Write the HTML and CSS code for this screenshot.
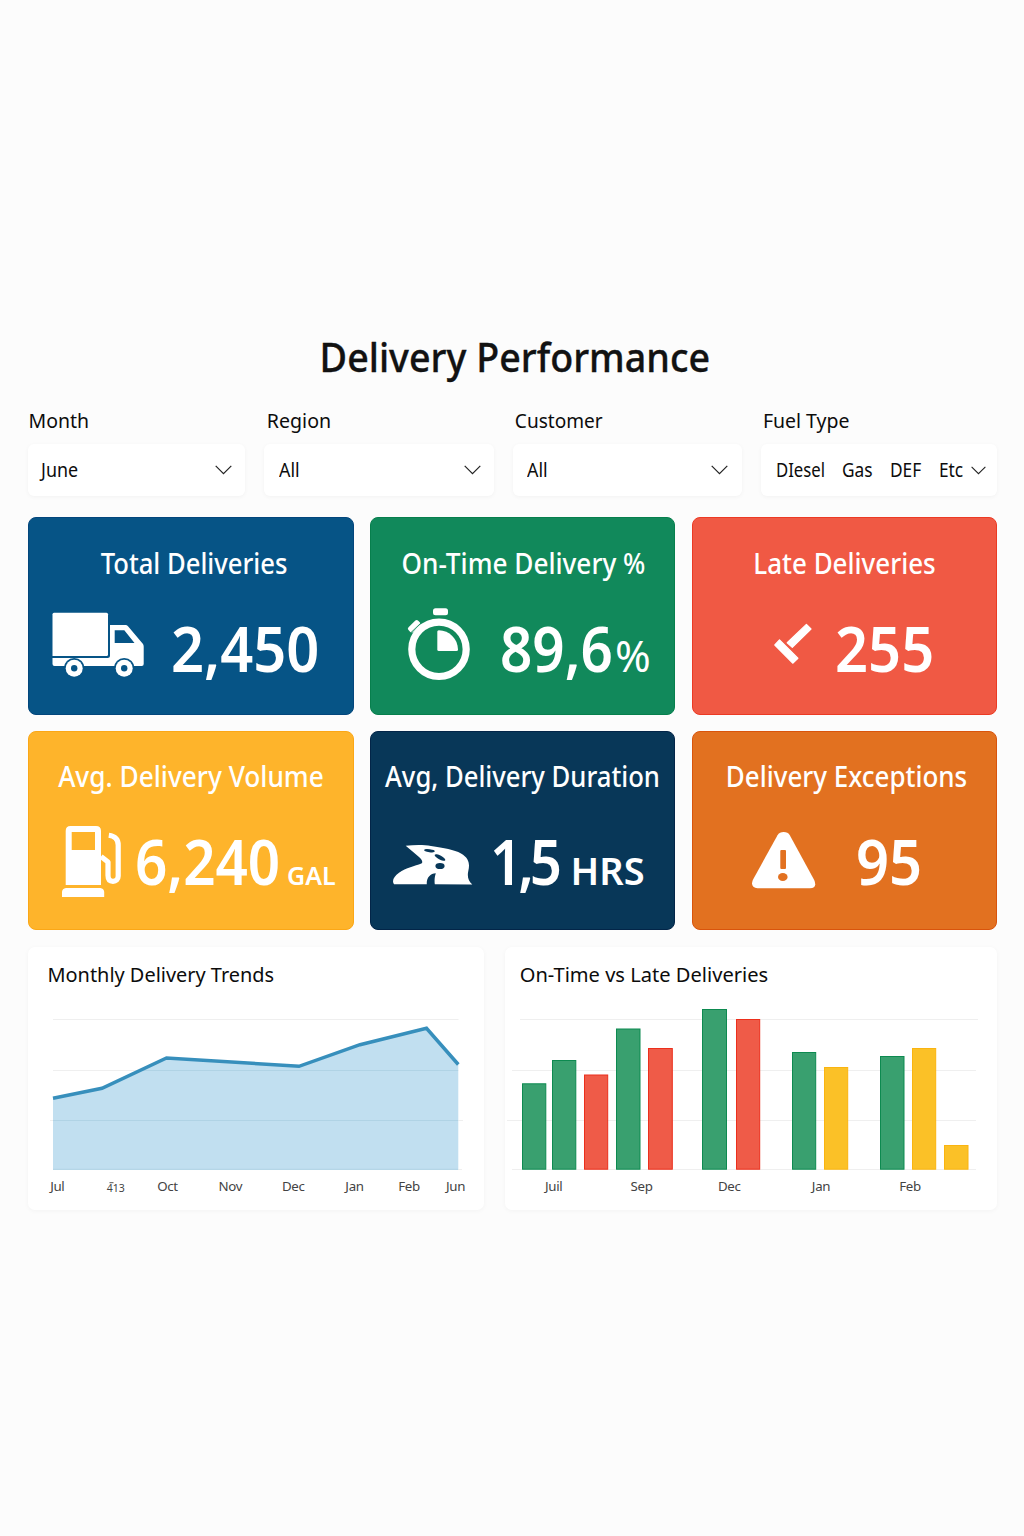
FILE: index.html
```
<!DOCTYPE html>
<html lang="en">
<head>
<meta charset="utf-8">
<title>Delivery Performance</title>
<link rel="stylesheet" href="styles.css">
</head>
<body>
<main class="dashboard">
  <h1 class="page-title">Delivery Performance</h1>

  <section class="filters">
    <div class="filter filter-month">
      <span class="filter-label">Month</span>
      <div class="select"><span class="value">June</span>
        <svg class="chevron" viewBox="0 0 17 10"><path d="M.7 .8 8.5 8.6 16.3 .8"/></svg></div>
    </div>
    <div class="filter filter-region">
      <span class="filter-label">Region</span>
      <div class="select"><span class="value">All</span>
        <svg class="chevron" viewBox="0 0 17 10"><path d="M.7 .8 8.5 8.6 16.3 .8"/></svg></div>
    </div>
    <div class="filter filter-customer">
      <span class="filter-label">Customer</span>
      <div class="select"><span class="value">All</span>
        <svg class="chevron" viewBox="0 0 17 10"><path d="M.7 .8 8.5 8.6 16.3 .8"/></svg></div>
    </div>
    <div class="filter filter-fuel">
      <span class="filter-label">Fuel Type</span>
      <div class="select">
        <span class="value opt-diesel">DIesel</span><span class="value opt-gas">Gas</span><span class="value opt-def">DEF</span><span class="value opt-etc">Etc</span>
        <svg class="chevron small" viewBox="0 0 17 10"><path d="M.7 .8 8.5 8.6 16.3 .8"/></svg></div>
    </div>
  </section>

  <section class="kpis">
    <article class="kpi kpi-total">
      <h2>Total Deliveries</h2>
      <div class="kpi-body">
        <svg class="icon" width="92" height="90" viewBox="52 600 92 90">
          <path d="M54 612.7H106.500Q108 612.700 108 614.200V654.500Q108 656 106.500 656H52.500V614.200Q52.500 612.700 54 612.700Z"/>
          <path fill-rule="evenodd" d="M52.500 658H107.500Q110 658 110 655.500V625H125.500Q127 625 128 626.200L143 644Q143.700 645 143.700 646.500V664Q143.700 666 141.700 666H54.500Q52.500 666 52.500 664ZM114.700 630.200V643H134.500L124.300 630.200Z"/>
          <g class="cut"><circle cx="74.200" cy="668.300" r="10.400"/><circle cx="124.200" cy="668.300" r="10.400"/></g>
          <circle cx="74.200" cy="668.300" r="8.500"/><circle cx="124.200" cy="668.300" r="8.500"/>
          <g class="cut"><circle cx="74.200" cy="668.300" r="3.200"/><circle cx="124.200" cy="668.300" r="3.200"/></g>
        </svg>
        <div class="figure"><span class="number">2,450</span></div>
      </div>
    </article>

    <article class="kpi kpi-ontime">
      <h2>On-Time Delivery %</h2>
      <div class="kpi-body">
        <svg class="icon" width="64" height="90" viewBox="406 600 64 90">
          <circle class="ring" cx="439" cy="649.300" r="27.200"/>
          <path d="M438.800 630.300Q437.300 630.300 437.300 631.800V649.500Q437.300 651 438.800 651H456.500Q458 651 458 649.500C457.600 638.500 449.500 630.700 438.800 630.300Z"/>
          <rect x="433" y="608.300" width="15" height="7" rx="2.500"/>
          <rect x="407.500" y="623" width="13.500" height="6.600" rx="2" transform="rotate(-44 414.200 626.300)"/>
          <path class="seam" d="M409 634.500 421.500 622.500"/>
        </svg>
        <div class="figure"><span class="number">89,6</span><span class="unit">%</span></div>
      </div>
    </article>

    <article class="kpi kpi-late">
      <h2>Late Deliveries</h2>
      <div class="kpi-body">
        <svg class="icon" width="40" height="90" viewBox="773 600 40 90">
          <path class="soft" d="M806.400 624.400 811 629 792.300 647.400 787.200 642.800Z"/>
          <path class="soft" d="M779.500 639.800 797.900 658.200 792.700 663.200 774.800 645Z"/>
        </svg>
        <div class="figure"><span class="number">255</span></div>
      </div>
    </article>

    <article class="kpi kpi-volume">
      <h2>Avg. Delivery Volume</h2>
      <div class="kpi-body">
        <svg class="icon" width="62" height="90" viewBox="61 813 62 90">
          <path fill-rule="evenodd" d="M70.500 826H96Q101 826 101 831V885H65.700V831Q65.700 826 70.500 826ZM71.700 832V850H95V832Z"/>
          <path d="M66 888H100.300Q104 888.500 104.200 892V897H62V892Q62.200 888.500 66 888Z"/>
          <path class="hose" d="M101 856.500 108 862V875.500C108 879.500 110 881.300 113 881.300S118.200 879.500 118.200 876V845C118.200 839 115 836.200 108.800 835.300"/>
        </svg>
        <div class="figure"><span class="number">6,240</span><span class="unit">GAL</span></div>
      </div>
    </article>

    <article class="kpi kpi-duration">
      <h2>Avg, Delivery Duration</h2>
      <div class="kpi-body">
        <svg class="icon" width="81" height="90" viewBox="392 813 81 90">
          <path d="M405.700 845.700C415 844.700 424 844.600 431 846C444 848.200 454 849.500 461 853.500C469 858 470 864 468.300 871C467 877 468.500 881 472.300 884.500L434.800 884.300C434.200 880 434.800 876.500 435.800 873.300C430 873.600 426.300 878 426.800 884.200H394C391.500 880.500 394 876.500 399 872.700C406 867.800 415 866.300 421.300 863.600C423.400 862.300 421.800 859.500 419 857C414.500 853 410 849.300 405.700 845.700Z"/>
          <g class="cut">
            <ellipse cx="429.500" cy="850.700" rx="5.400" ry="1.500" transform="rotate(7 429.500 850.700)"/>
            <ellipse cx="440" cy="857.500" rx="5.900" ry="2" transform="rotate(27 440 857.500)"/>
            <ellipse cx="440" cy="866" rx="4.600" ry="3.100"/>
          </g>
        </svg>
        <div class="figure"><span class="number">1,5</span><span class="unit">HRS</span></div>
      </div>
    </article>

    <article class="kpi kpi-exceptions">
      <h2>Delivery Exceptions</h2>
      <div class="kpi-body">
        <svg class="icon" width="66" height="90" viewBox="751 813 66 90">
          <path d="M777.500 835.300Q779.500 832 783.700 832T789.800 835.300L814.200 880Q817.500 888 810 888.200H757.500Q750 887.500 752.800 880Z"/>
          <g class="cut"><rect x="780.300" y="850" width="5.700" height="19" rx="1"/><ellipse cx="782.800" cy="877" rx="4.800" ry="4"/></g>
        </svg>
        <div class="figure"><span class="number">95</span></div>
      </div>
    </article>
  </section>

  <section class="charts">
    <article class="panel panel-trend">
      <h3>Monthly Delivery Trends</h3>
      <svg class="chart" width="456" height="222" viewBox="28 988 456 222">
        <path class="grid" d="M53 1019.500H458.500M53 1070.500H458.500M50 1120.500H463M53 1169.500H462"/>
        <path class="area" d="M53 1098.500 102 1088.500 166.500 1058 299 1066.500 360 1045 426.500 1028.500 458.300 1064.500V1169.700H53Z"/>
        <path class="grid over" d="M141 1070.500H458M53 1120.500H458M53 1169.300H458"/>
        <path class="line" d="M53 1098.300 102 1088.300 166.500 1058 299 1066.300 360 1044.700 426.500 1028.300 458.300 1064.500"/>
        <g class="axis">
          <text x="57.300" y="1191">Jul</text>
          <text x="167.500" y="1191">Oct</text>
          <text x="230.300" y="1191">Nov</text>
          <text x="293.300" y="1191">Dec</text>
          <text x="354.500" y="1191">Jan</text>
          <text x="409" y="1191">Feb</text>
          <text x="455.500" y="1191">Jun</text>
          <text class="tiny" x="115.800" y="1192">413</text>
        </g>
        <path class="macron" d="M109.500 1182.700H113.500"/>
      </svg>
    </article>

    <article class="panel panel-compare">
      <h3>On-Time vs Late Deliveries</h3>
      <svg class="chart" width="492" height="222" viewBox="505 988 492 222">
        <path class="grid" d="M520 1019.500H978M512 1070.500H976M507 1120.500H976M512 1169.500H976"/>
        <g class="bar ontime">
          <rect x="522.500" y="1083.800" width="23.300" height="85.400"/>
          <rect x="552.500" y="1060.500" width="23.300" height="108.700"/>
          <rect x="616.500" y="1029" width="23.500" height="140.200"/>
          <rect x="702.500" y="1009.500" width="24" height="159.700"/>
          <rect x="792.500" y="1052.500" width="23.200" height="116.700"/>
          <rect x="880.500" y="1056.500" width="23.500" height="112.700"/>
        </g>
        <g class="bar late">
          <rect x="584.500" y="1075" width="23.200" height="94.200"/>
          <rect x="648.500" y="1048.500" width="23.800" height="120.700"/>
          <rect x="736.500" y="1019.500" width="23.200" height="149.700"/>
        </g>
        <g class="bar pending">
          <rect x="824.500" y="1067.500" width="23.200" height="101.700"/>
          <rect x="912.500" y="1048.500" width="23.200" height="120.700"/>
          <rect x="944.500" y="1145.500" width="23.500" height="23.700"/>
        </g>
        <g class="axis">
          <text x="553.700" y="1191">Juil</text>
          <text x="641.500" y="1191">Sep</text>
          <text x="729.300" y="1191">Dec</text>
          <text x="821" y="1191">Jan</text>
          <text x="910" y="1191">Feb</text>
        </g>
      </svg>
    </article>
  </section>
</main>
</body>
</html>
```
FILE: styles.css
```
* { box-sizing: border-box; }

body {
  margin: 0;
  min-height: 1536px;
  background: #fcfcfc;
  color: #0c0c0c;
  font-family: "Noto Sans", "Open Sans", sans-serif;
}

h1, h2, h3 { margin: 0; font-weight: 500; white-space: nowrap; }

.dashboard { padding: 329px 27px 0 28px; }

.page-title {
  padding-left: 5px;
  height: 56px;
  font-size: 40.5px;
  line-height: 56px;
  text-align: center;
  color: #121212;
  -webkit-text-stroke: .35px currentColor;
  transform: scaleX(.93);
}

/* Filters */
.filters {
  display: grid;
  grid-template-columns: 217px 230px 229px 236px;
  column-gap: 19px;
  margin-top: 21px;
}

.filter { display: flex; flex-direction: column; align-items: stretch; gap: 10px; }

.filter-label {
  height: 28px;
  padding-left: var(--label-indent);
  font-size: 20.5px;
  line-height: 28px;
  transform: scaleX(.95);
  transform-origin: left;
}

.select {
  display: flex;
  align-items: center;
  height: 52px;
  padding: 0 var(--end) 0 var(--start);
  border-radius: 6px;
  background: #fff;
  box-shadow: 0 1px 4px rgba(0, 0, 0, .045);
}

.value {
  font-size: 19px;
  line-height: 28px;
  white-space: nowrap;
  transform: scaleX(.94);
  transform-origin: left;
}

.chevron {
  width: 17px;
  height: 10px;
  margin-left: auto;
  fill: none;
  stroke: #222;
  stroke-width: 1.2;
}
.chevron.small { width: 15px; height: 9px; flex: none; }

.filter-month { --label-indent: .5px; --start: 13px; --end: 13px; }
.filter-region { --label-indent: 3px; --start: 15px; --end: 13px; }
.filter-customer { --label-indent: 2px; --start: 14px; --end: 14px; }
.filter-region .filter-label { transform: scaleX(.955); }
.filter-customer .filter-label { transform: scaleX(.93); }
.filter-fuel { --label-indent: 2px; --start: 15px; --end: 11px; }
.filter-fuel .value { transform: scaleX(.91); }
.opt-diesel { width: 66px; }
.opt-gas { width: 48px; }
.opt-def { width: 49px; }
.opt-etc { width: 28px; }
.filter-fuel .opt-diesel { transform: scaleX(.88); }

/* KPI cards */
.kpis {
  display: grid;
  grid-template-columns: 326px 305px 305px;
  grid-template-rows: 198px 198.5px;
  column-gap: 16px;
  row-gap: 16px;
  margin-top: 21px;
}

/* the last column sits one pixel further out, flush with the filters */
.kpi-late, .kpi-exceptions { margin: 0 -1px 0 1px; }

.kpi {
  padding-top: var(--top, 25px);
  border: 1px solid var(--edge);
  border-radius: 8px;
  background: var(--tone);
  color: #fff;
}

.kpi h2 {
  height: 40px;
  font-size: 28px;
  line-height: 40px;
  text-align: center;
  transform: translateX(var(--shift, 0)) scaleX(var(--fit, .925));
}

.kpi-body {
  display: flex;
  align-items: flex-start;
  gap: var(--gap);
  height: 90px;
  margin-top: 17px;
  padding-left: var(--inset);
}

.icon { flex: none; fill: #fff; }
.icon .cut { fill: var(--tone); }
.icon .ring { fill: none; stroke: #fff; stroke-width: 7.2; }
.icon .seam { fill: none; stroke: var(--tone); stroke-width: 1; }
.icon .hose { fill: none; stroke: #fff; stroke-width: 5.2; stroke-linejoin: round; }
.icon .soft { stroke: #fff; stroke-width: 1.2; stroke-linejoin: round; }

.figure { display: flex; align-items: baseline; padding-top: 3px; white-space: nowrap; }

.number {
  width: var(--num-width, auto);
  font-size: 62.5px;
  font-weight: 600;
  line-height: 90px;
  transform: scaleX(var(--num-fit, .925));
  transform-origin: left;
}

.unit { line-height: 1; font-weight: 600; }

.kpi-total { --tone: #065486; --edge: #03467c; --inset: 23px; --gap: 27px; --shift: 3px; --fit: .915; }
.kpi-ontime { --tone: #11895b; --edge: #077f4d; --inset: 35px; --gap: 30px; --num-width: 115px; --num-fit: .905; --shift: 1px; --fit: .935; }
.kpi-ontime .unit { font-size: 43px; font-weight: 400; }
.kpi-late { --tone: #f05944; --edge: #ec3a24; --inset: 80px; --gap: 22px; --fit: .928; }
.kpi-volume { --tone: #feb42b; --edge: #fba716; --inset: 32px; --gap: 11.5px; --num-width: 152.5px; --num-fit: .905; --fit: .938; }
.kpi-volume .unit { font-size: 25px; }
.kpi-duration { --tone: #083758; --edge: #032548; --inset: 21px; --gap: 16.5px; --num-width: 81px; --num-fit: .9; --fit: .916; }
.kpi-duration .number { letter-spacing: -4.5px; }
.kpi-duration .unit { font-size: 38px; }
.kpi-exceptions { --tone: #e27120; --edge: #d9540c; --inset: 58px; --gap: 38.5px; --shift: 2px; --fit: .927; }
.kpi-volume, .kpi-duration, .kpi-exceptions { --top: 24px; }

/* Charts */
.charts {
  display: grid;
  grid-template-columns: 456px 492px;
  justify-content: space-between;
  margin-top: 17.5px;
}

.panel {
  height: 263px;
  padding-top: 13px;
  border-radius: 7px;
  background: #fff;
  box-shadow: 0 1px 5px rgba(0, 0, 0, .04);
}

.panel h3 {
  height: 28px;
  font-size: 20.5px;
  font-weight: 400;
  line-height: 28px;
  transform: scaleX(.972);
  transform-origin: left;
}
.panel-trend h3 { padding-left: 20px; }
.panel-compare h3 { padding-left: 15px; transform: scaleX(.98); }

.chart { display: block; }
.grid { fill: none; stroke: #efefef; stroke-width: 1; }
.grid.over { stroke: #b0d3e5; }
.area { fill: #c1dff0; }
.line { fill: none; stroke: #378fbc; stroke-width: 3.5; }

.bar rect { stroke-width: 1; }
.ontime rect { fill: #39a06f; stroke: #0d8a50; }
.late rect { fill: #ef5b48; stroke: #ec2f1c; }
.pending rect { fill: #fbc127; stroke: #fab410; }

.axis text {
  fill: #434343;
  font-size: 13.3px;
  letter-spacing: -.35px;
  text-anchor: middle;
}
.axis .tiny { font-size: 10.5px; letter-spacing: 0; }
.macron { stroke: #555; stroke-width: 1; }
```
